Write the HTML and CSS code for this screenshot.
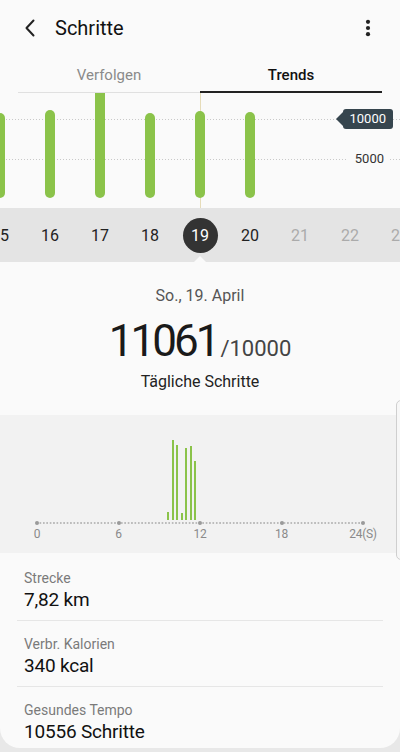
FILE: index.html
```html
<!DOCTYPE html>
<html lang="de">
<head>
    <meta charset="UTF-8">
    <meta name="viewport" content="width=device-width, initial-scale=1.0">
    <title>Schritte</title>
    <link rel="stylesheet" href="styles.css">
</head>
<body>
    <div class="screen">
        <header class="topbar">
            <button class="icon-btn back" aria-label="Zurück">
                <svg width="24" height="24" viewBox="0 0 24 24"><path d="M15.5 4.5 L8.5 12 L15.5 19.5" fill="none" stroke="#222" stroke-width="2" stroke-linecap="round" stroke-linejoin="round"/></svg>
            </button>
            <h1 class="title">Schritte</h1>
            <button class="icon-btn more" aria-label="Mehr">
                <svg width="24" height="24" viewBox="0 0 24 24"><circle cx="12" cy="5.8" r="2.1" fill="#222"/><circle cx="12" cy="12" r="2.1" fill="#222"/><circle cx="12" cy="18.2" r="2.1" fill="#222"/></svg>
            </button>
        </header>

        <nav class="tabs">
            <div class="tab">Verfolgen</div>
            <div class="tab active">Trends</div>
        </nav>

        <!-- daily trend chart, one column per day -->
        <div class="trend-chart">
            <div class="grid-line goal"></div>
            <div class="grid-line half"></div>
            <div class="cursor-line"></div>
            <div class="bars">
                <div class="bar-col"><div class="bar" style="height:85px"></div></div>
                <div class="bar-col"><div class="bar" style="height:88px"></div></div>
                <div class="bar-col"><div class="bar" style="height:112px"></div></div>
                <div class="bar-col"><div class="bar" style="height:85px"></div></div>
                <div class="bar-col"><div class="bar" style="height:87px"></div></div>
                <div class="bar-col"><div class="bar" style="height:86px"></div></div>
                <div class="bar-col"></div>
                <div class="bar-col"></div>
                <div class="bar-col"></div>
            </div>
            <div class="goal-tag">10000</div>
            <div class="axis-label">5000</div>
        </div>

        <div class="days">
            <div class="day-row">
                <div class="day">15</div>
                <div class="day">16</div>
                <div class="day">17</div>
                <div class="day">18</div>
                <div class="day active"><span>19</span></div>
                <div class="day">20</div>
                <div class="day future">21</div>
                <div class="day future">22</div>
                <div class="day future">23</div>
            </div>
            <div class="pointer"></div>
        </div>

        <div class="card">
            <section class="summary">
                <div class="date">So., 19. April</div>
                <div class="count"><span class="big">11061</span><span class="goal">/10000</span></div>
                <div class="caption">Tägliche Schritte</div>
            </section>

            <!-- hourly steps, 20 min per bar -->
            <section class="hourly">
                <div class="hplot">
                    <div class="hbar" style="height:8px"></div>
                    <div class="hbar" style="height:80px"></div>
                    <div class="hbar" style="height:75px"></div>
                    <div class="hbar" style="height:7px"></div>
                    <div class="hbar" style="height:72px"></div>
                    <div class="hbar" style="height:74px"></div>
                    <div class="hbar" style="height:59px"></div>
                </div>
                <div class="haxis">
                    <span class="tick"></span>
                    <span class="tick"></span>
                    <span class="tick"></span>
                    <span class="tick"></span>
                    <span class="tick"></span>
                </div>
                <div class="hlabels">
                    <span>0</span>
                    <span>6</span>
                    <span>12</span>
                    <span>18</span>
                    <span>24(S)</span>
                </div>
            </section>

            <ul class="stats">
                <li>
                    <div class="stat-label">Strecke</div>
                    <div class="stat-value">7,82 km</div>
                </li>
                <li>
                    <div class="stat-label">Verbr. Kalorien</div>
                    <div class="stat-value">340 kcal</div>
                </li>
                <li>
                    <div class="stat-label">Gesundes Tempo</div>
                    <div class="stat-value">10556 Schritte</div>
                </li>
            </ul>
        </div>
    </div>
    <div class="scroll-thumb"></div>
</body>
</html>
```

FILE: styles.css
```css
html, body {
    margin: 0;
    overflow: hidden;
}
body {
    font-family: Roboto, "Noto Sans", sans-serif;
    background-color: #e8e8e8;
    color: #111;
    position: relative;
    width: 400px;
    height: 752px;
}
.screen {
    background-color: #fafafa;
    border-radius: 0 0 20px 20px;
}

/* top bar */
.topbar {
    height: 56px;
    display: flex;
    align-items: center;
    padding: 0 20px 0 18px;
}
.icon-btn {
    width: 24px;
    height: 24px;
    padding: 0;
    border: none;
    background: none;
    display: flex;
}
.title {
    flex: 1;
    margin: 0 0 0 13px;
    font-size: 20px;
    font-weight: 400;
    color: #111;
}

/* tabs */
.tabs {
    display: flex;
    margin: 0 18px;
}
.tab {
    flex: 1;
    height: 37px;
    box-sizing: border-box;
    padding-top: 2px;
    display: flex;
    align-items: center;
    justify-content: center;
    font-size: 15px;
    color: #8a8a8a;
    border-bottom: 1px solid #e0e0e0;
}
.tab.active {
    color: #111;
    font-weight: 500;
    border-bottom: 2px solid #222;
}

/* trend chart */
.trend-chart {
    position: relative;
    height: 115px;
    overflow: hidden;
}
.grid-line {
    position: absolute;
    left: 0;
    right: 0;
    height: 1px;
    background-image: linear-gradient(to right, #c9c9c9 1px, transparent 1px);
    background-size: 3px 1px;
}
.grid-line.goal {
    top: 26px;
}
.grid-line.half {
    top: 66px;
}
.cursor-line {
    position: absolute;
    top: 0;
    bottom: 0;
    left: 199.5px;
    width: 1px;
    background-color: #e6dcb9;
}
.bars {
    position: relative;
    display: flex;
    height: 100%;
    box-sizing: border-box;
    padding-bottom: 10px;
    margin-left: -25px;
}
.bar-col {
    flex: none;
    width: 50px;
    display: flex;
    justify-content: center;
    align-items: flex-end;
}
.bar {
    width: 10px;
    border-radius: 5px;
    background-color: #8bc34a;
}
.goal-tag {
    position: absolute;
    right: 7px;
    top: 16px;
    height: 20px;
    line-height: 20px;
    padding: 0 7px 0 6px;
    font-size: 13px;
    color: #fff;
    background-color: #36454e;
    border-radius: 3px;
}
.goal-tag::before {
    content: "";
    position: absolute;
    left: -7px;
    top: 3px;
    border-top: 7px solid transparent;
    border-bottom: 7px solid transparent;
    border-right: 7px solid #36454e;
}
.axis-label {
    position: absolute;
    right: 10px;
    top: 58px;
    line-height: 16px;
    padding: 0 6px 0 8px;
    font-size: 13px;
    color: #333;
    background-color: #fafafa;
}

/* day strip */
.days {
    position: relative;
    height: 54px;
    background-color: #e4e4e4;
    display: flex;
    align-items: center;
    overflow: hidden;
}
.day-row {
    display: flex;
    margin-left: -25px;
}
.day {
    flex: none;
    width: 50px;
    display: flex;
    justify-content: center;
    align-items: center;
    font-size: 16px;
    color: #222;
}
.day.future {
    color: #ababab;
}
.day.active span {
    width: 35px;
    height: 35px;
    border-radius: 50%;
    background-color: #333;
    color: #fff;
    display: flex;
    justify-content: center;
    align-items: center;
}
.pointer {
    position: absolute;
    bottom: 0;
    left: 194px;
    border-left: 6px solid transparent;
    border-right: 6px solid transparent;
    border-bottom: 6px solid #fafafa;
}

/* summary */
.summary {
    padding-top: 24px;
    text-align: center;
}
.date {
    font-size: 16px;
    line-height: 20px;
    color: #555;
}
.count {
    margin-top: 13px;
    display: flex;
    justify-content: center;
    align-items: baseline;
}
.big {
    font-size: 44px;
    line-height: 44px;
    letter-spacing: -3px;
    color: #1a1a1a;
    margin-right: 3px;
}
.goal {
    font-size: 22px;
    line-height: 22px;
    color: #444;
}
.caption {
    margin-top: 9px;
    font-size: 16px;
    line-height: 20px;
    color: #222;
}

/* hourly chart */
.hourly {
    margin-top: 23px;
    height: 138px;
    box-sizing: border-box;
    padding: 20px 0 0 37px;
    background-color: #f2f2f2;
}
.hplot {
    width: 326px;
    height: 85px;
    box-sizing: border-box;
    padding-left: 130.3px;
    display: flex;
    align-items: flex-end;
    gap: 2.53px;
}
.hbar {
    width: 2px;
    background-color: #8bc34a;
}
.haxis {
    width: 326px;
    height: 6px;
    display: flex;
    justify-content: space-between;
    align-items: center;
    background-image: radial-gradient(circle, #bcbcbc 0.8px, transparent 1.1px);
    background-size: 3.4px 6px;
    background-position: -1.7px 0;
}
.tick {
    width: 4px;
    height: 4px;
    margin: 0 -2px;
    border-radius: 50%;
    background-color: #9a9a9a;
}
.hlabels {
    width: 326px;
    margin-top: 1px;
    display: flex;
    justify-content: space-between;
    font-size: 12px;
    line-height: 14px;
    letter-spacing: -0.3px;
    color: #8a8a8a;
}
.hlabels span {
    width: 0;
    display: flex;
    justify-content: center;
    white-space: nowrap;
}

/* stats list */
.stats {
    list-style: none;
    margin: 0 17px;
    padding: 2px 0 4px;
}
.stats li {
    padding: 13px 7px 8px;
    border-bottom: 1px solid #e6e6e6;
}
.stats li:last-child {
    border-bottom: none;
    padding-bottom: 0;
}
.stat-label {
    font-size: 14px;
    line-height: 20px;
    color: #7a7a7a;
}
.stat-value {
    font-size: 19px;
    line-height: 24px;
    letter-spacing: -0.2px;
    color: #111;
}

.scroll-thumb {
    position: absolute;
    top: 400px;
    right: -6px;
    width: 8px;
    height: 158px;
    border: 1px solid #cfcfcf;
    border-radius: 5px;
    background-color: #f7f7f7;
}
```
